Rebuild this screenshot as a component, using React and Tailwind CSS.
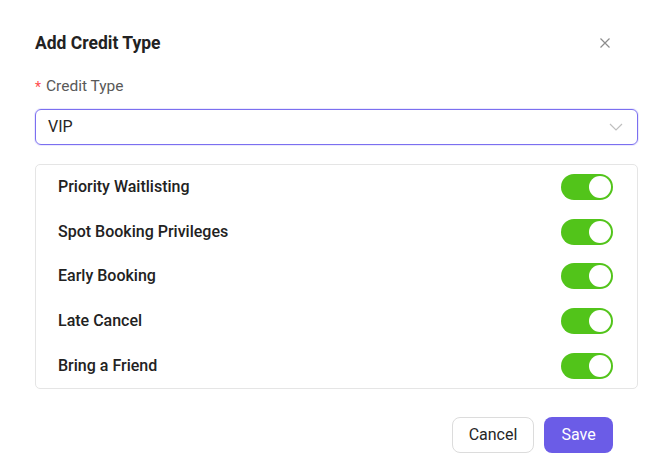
import React, { useState } from "react";

const Toggle = ({ on, onChange }) => (
    <button
        type="button"
        onClick={onChange}
        className={`relative w-[52px] h-[26px] rounded-full shrink-0 ${on ? "bg-[#52c41a]" : "bg-gray-300"}`}
    >
        <span
            className={`absolute top-[2px] w-[22px] h-[22px] rounded-full bg-white ${on ? "left-[28px]" : "left-[2px]"}`}
        />
    </button>
);

const App = () => {
    const [perks, setPerks] = useState([
        { id: 1, name: "Priority Waitlisting", on: true },
        { id: 2, name: "Spot Booking Privileges", on: true },
        { id: 3, name: "Early Booking", on: true },
        { id: 4, name: "Late Cancel", on: true },
        { id: 5, name: "Bring a Friend", on: true },
    ]);

    const flip = (id) =>
        setPerks(perks.map((p) => (p.id === id ? { ...p, on: !p.on } : p)));

    return (
        <div className="w-[668px] h-[476px] bg-white font-['Roboto',sans-serif] text-[#1f1f1f]">
            <div className="pl-[35px] pr-[30px] pt-[31px]">
                <div className="flex items-center justify-between h-[24px]">
                    <h2 className="text-[17.5px] font-bold text-[#222]">Add Credit Type</h2>
                    <svg className="mr-[27px]" width="12" height="12" viewBox="0 0 12 12" fill="none" stroke="#8c8c8c" strokeWidth="1.2">
                        <path d="M1.5 1.5l9 9M10.5 1.5l-9 9" />
                    </svg>
                </div>

                <div className="mt-[22px] flex items-center h-[20px] text-[15.5px] text-[#595959]">
                    <span className="text-[#ff4d4f] mr-[5px] text-[14px]">*</span>
                    Credit Type
                </div>

                <div className="mt-[12px] h-[36px] border border-[#7b6ff0] rounded-[6px] flex items-center justify-between pl-[12px] pr-[14px] shadow-[0_0_0_1px_rgba(123,111,240,0.15)]">
                    <span className="text-[16px] text-[#262626]">VIP</span>
                    <svg width="14" height="8" viewBox="0 0 14 8" fill="none" stroke="#bfbfbf" strokeWidth="1.2">
                        <path d="M1 1l6 6 6-6" />
                    </svg>
                </div>

                <div className="mt-[19px] border border-[#e5e5e5] rounded-[5px] pl-[22px] pr-[24px] flex flex-col">
                    {perks.map((p) => (
                        <div key={p.id} className="h-[44.6px] flex items-center justify-between">
                            <span className="text-[16px] font-medium text-[#222]">{p.name}</span>
                            <Toggle on={p.on} onChange={() => flip(p.id)} />
                        </div>
                    ))}
                </div>

                <div className="mt-[28px] flex justify-end gap-[10px] pr-[25px]">
                    <button className="h-[36px] w-[82px] rounded-[8px] border border-[#dcdcdc] bg-white text-[16px] text-[#262626]">
                        Cancel
                    </button>
                    <button className="h-[36px] w-[69px] rounded-[8px] bg-[#6b5ce7] text-[16px] text-white">
                        Save
                    </button>
                </div>
            </div>
        </div>
    );
};

export default App;
